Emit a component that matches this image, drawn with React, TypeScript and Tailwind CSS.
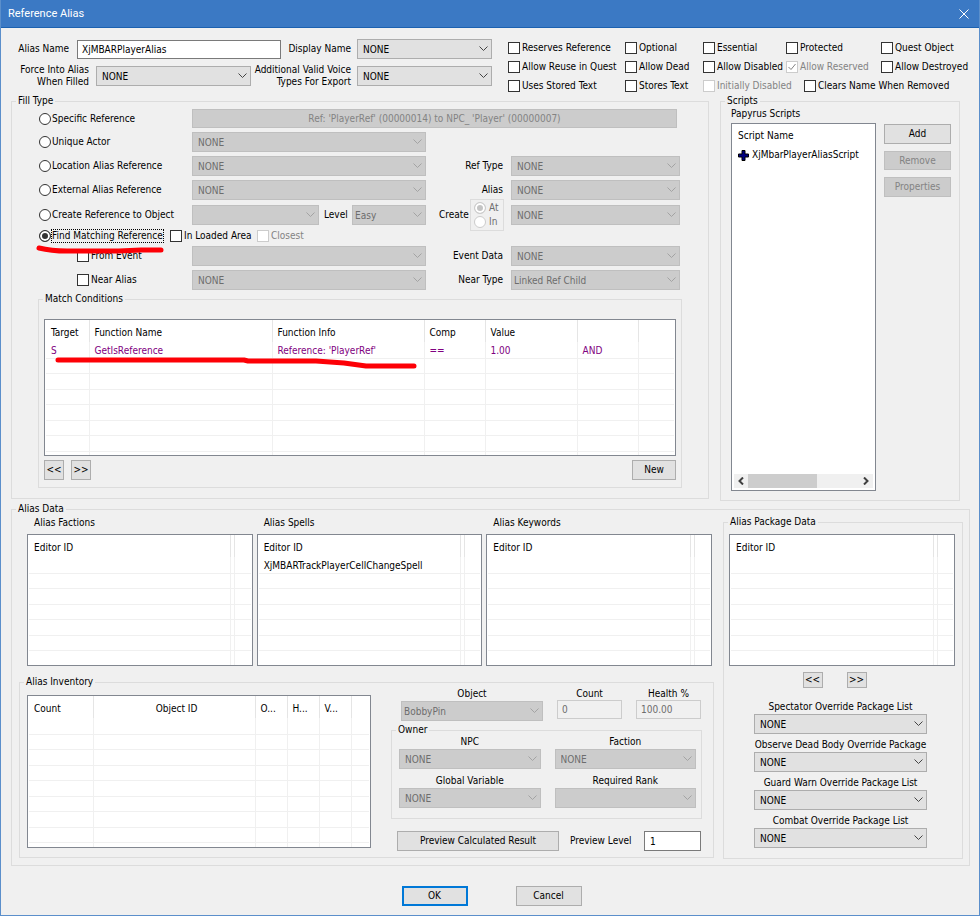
import { useId } from "react";
import type { ReactNode } from "react";

type Column = { title: string; width?: string; align?: string };

const packageLists = [
  "Spectator Override Package List",
  "Observe Dead Body Override Package",
  "Guard Warn Override Package List",
  "Combat Override Package List"
];

const editorColumns: Column[] = [{ title: "Editor ID" }, { title: "", width: "w-1" }, { title: "", width: "w-4" }];

const conditionColumns: Column[] = [
  { title: "Target", width: "w-[43px]" },
  { title: "Function Name", width: "w-[183px]" },
  { title: "Function Info" },
  { title: "Comp", width: "w-[61px]" },
  { title: "Value", width: "w-[92px]" },
  { title: "", width: "w-[61px]" },
  { title: "", width: "w-[36px]" }
];

const inventoryColumns: Column[] = [
  { title: "Count", width: "w-[64px]" },
  { title: "Object ID", align: "text-center" },
  { title: "O...", width: "w-8" },
  { title: "H...", width: "w-8" },
  { title: "V...", width: "w-8" },
  { title: "", width: "w-[18px]" }
];

export default function App() {
  return (
    <main className="flex min-h-screen w-full flex-col border border-t-0 border-[#5b8fcb] bg-[#f0f0f0] font-['DejaVu_Sans_Condensed','DejaVu_Sans',sans-serif] text-[10px] leading-3 text-black">
      <header className="flex h-7 items-center justify-between border-b border-[#1c61b0] bg-[#3b79c4] pr-[10px] pl-[7px] text-white">
        <h1 className="font-[Roboto,'Open_Sans',sans-serif] text-[11px]">Reference Alias</h1>
        <button type="button" aria-label="Close">
          <svg width="10" height="10" viewBox="0 0 10 10" stroke="currentColor" fill="none">
            <path d="M0.5 0.5 9.5 9.5M9.5 0.5 0.5 9.5" />
          </svg>
        </button>
      </header>

      <div className="flex flex-col pt-[10px] pr-[9px] pl-[10px]">
        <div className="flex gap-4">
          <NameFields />
          <AliasFlags />
        </div>
        <div className="flex items-start gap-[11px] pr-[10px]">
          <FillType />
          <Scripts />
        </div>
        <AliasData />
        <div className="mt-5 flex justify-center gap-12 pl-0.5">
          <button type="button" className="h-5 w-[66px] border-2 border-[#0078d7] bg-[#e1e1e1]">
            OK
          </button>
          <PushButton className="h-5 w-[66px]">Cancel</PushButton>
        </div>
      </div>
    </main>
  );
}

function NameFields() {
  return (
    <div className="flex flex-1 flex-col gap-[5px] pt-px">
      <div className="flex h-5 items-center">
        <label htmlFor="alias-name" className="w-[58px] text-right">
          Alias Name
        </label>
        <input id="alias-name" defaultValue="XjMBARPlayerAlias" className="ml-2 h-[19px] min-w-0 flex-1 border border-[#7a7a7a] bg-white px-1" />
        <label htmlFor="display-name" className="w-[70px] text-right">
          Display Name
        </label>
        <Combo id="display-name" value="NONE" className="ml-[6px] w-[135px]" />
      </div>
      <div className="flex h-6 items-center">
        <label htmlFor="force-alias" className="w-[78px] text-right">
          Force Into Alias
          <br />
          When Filled
        </label>
        <Combo id="force-alias" value="NONE" className="ml-[7px] min-w-0 flex-1" />
        <label htmlFor="voice-types" className="w-[100px] text-right">
          Additional Valid Voice
          <br />
          Types For Export
        </label>
        <Combo id="voice-types" value="NONE" className="ml-[6px] w-[135px]" />
      </div>
    </div>
  );
}

function AliasFlags() {
  return (
    <div className="grid auto-rows-[19px] grid-cols-[117px_78px_83px_95px_89px] items-center">
      <Check label="Reserves Reference" />
      <Check label="Optional" />
      <Check label="Essential" />
      <Check label="Protected" />
      <Check label="Quest Object" />
      <Check label="Allow Reuse in Quest" />
      <Check label="Allow Dead" />
      <Check label="Allow Disabled" />
      <Check label="Allow Reserved" checked disabled />
      <Check label="Allow Destroyed" />
      <Check label="Uses Stored Text" />
      <Check label="Stores Text" />
      <Check label="Initially Disabled" disabled />
      <div className="col-span-2 pl-[18px]">
        <Check label="Clears Name When Removed" />
      </div>
    </div>
  );
}

function FillType() {
  return (
    <Group title="Fill Type" className="flex-1" bodyClass="pr-[26px] pb-[10px] pl-[26px]">
      <div className="flex h-[23px] items-center pr-[5px] pl-px">
        <Radio label="Specific Reference" className="w-[153px]" />
        <PushButton disabled className="h-[19px] flex-1">
          Ref: 'PlayerRef' (00000014) to NPC_ 'Player' (00000007)
        </PushButton>
      </div>
      <div className="flex gap-[13px] pb-px pl-px">
        <div className="flex-1">
          <div className="flex h-6 items-center">
            <Radio label="Unique Actor" className="w-[153px]" />
            <Combo value="NONE" label="Unique Actor" disabled className="flex-1" />
          </div>
          <div className="flex h-6 items-center">
            <Radio label="Location Alias Reference" className="w-[153px]" />
            <Combo value="NONE" label="Location Alias Reference" disabled className="flex-1" />
          </div>
          <div className="flex h-6 items-center">
            <Radio label="External Alias Reference" className="w-[153px]" />
            <Combo value="NONE" label="External Alias Reference" disabled className="flex-1" />
          </div>
          <div className="flex h-[26px] items-center">
            <Radio label="Create Reference to Object" className="w-[153px]" />
            <Combo value="" label="Object" disabled className="flex-1" />
            <label htmlFor="level" className="w-[33px] pl-[5px]">
              Level
            </label>
            <Combo id="level" value="Easy" tight disabled className="w-[74px]" />
          </div>
          <div className="relative flex h-4 items-center">
            <Radio label="Find Matching Reference" checked className="w-[131px]" />
            <Check label="In Loaded Area" className="w-[87px]" />
            <Check label="Closest" disabled />
            <svg className="pointer-events-none absolute top-4 -left-1 z-10" width="132" height="12" viewBox="0 0 132 12" fill="none" stroke="#fd0006" strokeWidth="5" strokeLinecap="round" strokeLinejoin="round">
              <path d="M4 4C12 6 20 7 32 7H84L106 6H126" />
            </svg>
          </div>
          <div className="flex h-[23px] items-center">
            <Check label="From Event" className="w-[153px] pl-[38px]" />
            <Combo value="" label="From Event" disabled className="flex-1" />
          </div>
          <div className="flex h-[25px] items-center">
            <Check label="Near Alias" className="w-[153px] pl-[38px]" />
            <Combo value="NONE" label="Near Alias" disabled className="flex-1" />
          </div>
        </div>
        <div className="w-[243px] pt-6">
          <SideField label="Ref Type" value="NONE" />
          <SideField label="Alias" value="NONE" />
          <div className="flex h-[26px] items-center pr-0.5">
            <span className="w-[31px]">Create</span>
            <div role="radiogroup" aria-label="Create" className="mr-[7px] flex h-8 w-[34px] shrink-0 flex-col justify-center gap-0.5 border border-[#dcdcdc] pl-[3px]">
              <Radio label="At" group="create" checked disabled />
              <Radio label="In" group="create" disabled />
            </div>
            <Combo value="NONE" label="Create target" disabled className="flex-1" />
          </div>
          <div className="pt-4">
            <SideField label="Event Data" value="NONE" />
            <SideField label="Near Type" value="Linked Ref Child" tight />
          </div>
        </div>
      </div>

      <Group title="Match Conditions" bodyClass="relative px-[5px] pt-[14px] pb-[7px]">
        <ListView
          columns={conditionColumns}
          rows={[["S", "GetIsReference", "Reference: 'PlayerRef'", "==", "1.00", "AND", ""]]}
          blanks={6}
          tail="h-1"
          rowClass="text-[#800080]"
        />
        <svg className="pointer-events-none absolute top-[49px] left-[15px]" width="364" height="20" viewBox="0 0 364 20" fill="none" stroke="#fd0006" strokeWidth="5" strokeLinecap="round" strokeLinejoin="round">
          <path d="M4 6H190L194 7H262L290 9L312 12H360" />
        </svg>
        <div className="mt-1 flex gap-[7px]">
          <PushButton className="h-5 w-5">&lt;&lt;</PushButton>
          <PushButton className="h-5 w-5">&gt;&gt;</PushButton>
          <PushButton className="ml-auto h-5 w-11">New</PushButton>
        </div>
      </Group>
    </Group>
  );
}

function SideField({ label, value, tight }: { label: string; value: string; tight?: boolean }) {
  const id = useId();
  return (
    <div className="flex h-6 items-center pr-0.5">
      <label htmlFor={id} className="w-16 text-right">
        {label}
      </label>
      <Combo id={id} value={value} tight={tight} disabled className="ml-2 flex-1" />
    </div>
  );
}

function Scripts() {
  return (
    <Group title="Scripts" className="w-[240px]" bodyClass="pr-2 pb-[9px] pl-[10px]">
      <h2 className="pt-px">Papyrus Scripts</h2>
      <div className="mt-[3px] flex gap-2">
        <div className="flex h-[368px] flex-1 flex-col border border-[#828790] bg-white p-0.5">
          <table className="w-full text-left">
            <thead>
              <tr>
                <th className="h-[19px] pl-1 font-normal">Script Name</th>
              </tr>
            </thead>
            <tbody>
              <tr>
                <td className="h-5 pl-1">
                  <span className="flex items-center gap-[3px]">
                    <svg width="11" height="11" viewBox="0 0 11 11">
                      <path d="M4 0.5H7V4H10.5V7H7V10.5H4V7H0.5V4H4Z" fill="#000080" stroke="#000" />
                    </svg>
                    XjMbarPlayerAliasScript
                  </span>
                </td>
              </tr>
            </tbody>
          </table>
          <div className="mt-auto flex h-[14px] items-center bg-[#f0f0f0] px-1">
            <svg width="6" height="8" viewBox="0 0 6 8" fill="none" stroke="#404040" strokeWidth="2">
              <path d="M5 0.5 1.5 4 5 7.5" />
            </svg>
            <span className="ml-1 h-full w-[69px] bg-[#cdcdcd]" />
            <svg className="ml-auto" width="6" height="8" viewBox="0 0 6 8" fill="none" stroke="#404040" strokeWidth="2">
              <path d="M1 0.5 4.5 4 1 7.5" />
            </svg>
          </div>
        </div>
        <div className="flex w-[67px] flex-col gap-[7px] pt-px">
          <PushButton className="h-5">Add</PushButton>
          <PushButton disabled className="h-[19px]">
            Remove
          </PushButton>
          <PushButton disabled className="h-5">
            Properties
          </PushButton>
        </div>
      </div>
    </Group>
  );
}

function AliasData() {
  return (
    <Group title="Alias Data" className="mt-0.5" bodyClass="flex gap-[9px] pr-[6px] pb-[6px] pl-[7px]">
      <div className="flex-1">
        <div className="flex gap-1 pr-0.5 pl-2">
          <EditorList title="Alias Factions" />
          <EditorList title="Alias Spells" rows={[["XjMBARTrackPlayerCellChangeSpell", "", ""]]} />
          <EditorList title="Alias Keywords" />
        </div>
        <Inventory />
      </div>
      <PackageData />
    </Group>
  );
}

function EditorList({ title, rows = [] }: { title: string; rows?: string[][] }) {
  return (
    <section className="min-w-0 flex-1">
      <h2 className="mb-[5px] pt-0.5 pl-[7px]">{title}</h2>
      <ListView columns={editorColumns} rows={rows} blanks={6 - rows.length} tail="h-[15px]" />
    </section>
  );
}

function Inventory() {
  return (
    <Group title="Alias Inventory" className="mt-[10px]" bodyClass="flex gap-5 pr-[11px] pb-[6px] pl-[7px]">
      <div className="flex-1 pt-[7px]">
        <ListView columns={inventoryColumns} rows={[]} blanks={8} tail="h-[5px]" />
      </div>
      <div className="w-[311px]">
        <div className="flex items-start gap-[14px] pl-[10px]">
          <StackField label="Object" value="BobbyPin" tight className="w-[142px]" />
          <NumberField label="Count" value="0" />
          <NumberField label="Health %" value="100.00" />
        </div>
        <Group title="Owner" className="mt-[3px]" bodyClass="grid grid-cols-2 gap-x-[14px] gap-y-[6px] pr-[5px] pb-[10px] pl-[7px]">
          <StackField label="NPC" value="NONE" />
          <StackField label="Faction" value="NONE" />
          <StackField label="Global Variable" value="NONE" />
          <StackField label="Required Rank" value="" />
        </Group>
        <div className="mt-3 flex items-center pr-px pl-[6px]">
          <PushButton className="h-5 w-[162px]">Preview Calculated Result</PushButton>
          <label htmlFor="preview-level" className="ml-[11px]">
            Preview Level
          </label>
          <input id="preview-level" defaultValue="1" className="ml-auto h-5 w-[57px] border border-[#7a7a7a] bg-white px-[5px]" />
        </div>
      </div>
    </Group>
  );
}

function PackageData() {
  return (
    <Group title="Alias Package Data" className="mt-px w-[240px] self-start" bodyClass="pt-[6px] pr-[7px] pb-[10px] pl-[5px]">
      <ListView columns={editorColumns} rows={[]} blanks={6} tail="h-[15px]" />
      <div className="mt-[6px] flex justify-center gap-6 pr-[15px]">
        <PushButton className="h-4 w-5">&lt;&lt;</PushButton>
        <PushButton className="h-4 w-5">&gt;&gt;</PushButton>
      </div>
      <div className="mt-[13px] flex flex-col gap-[5px] pr-7 pl-[25px]">
        {packageLists.map((title) => (
          <StackField key={title} label={title} value="NONE" enabled />
        ))}
      </div>
    </Group>
  );
}

function StackField({ label, value, enabled, tight, className = "" }: { label: string; value: string; enabled?: boolean; tight?: boolean; className?: string }) {
  const id = useId();
  return (
    <div className={`flex flex-col items-stretch gap-px ${className}`}>
      <label htmlFor={id} className="text-center whitespace-nowrap">
        {label}
      </label>
      <Combo id={id} value={value} tight={tight} disabled={!enabled} />
    </div>
  );
}

function NumberField({ label, value }: { label: string; value: string }) {
  const id = useId();
  return (
    <div className="flex w-[65px] flex-col">
      <label htmlFor={id} className="text-center">
        {label}
      </label>
      <input id={id} defaultValue={value} disabled className="h-[19px] w-full border border-[#cccccc] px-1 text-[#6d6d6d]" />
    </div>
  );
}

function Group({ title, className = "", bodyClass = "", children }: { title: string; className?: string; bodyClass?: string; children: ReactNode }) {
  return (
    <fieldset className={`min-w-0 border border-[#dcdcdc] ${className}`}>
      <legend className="ml-1 h-3 px-0.5">{title}</legend>
      <div className={bodyClass}>{children}</div>
    </fieldset>
  );
}

function ListView({ columns, rows, blanks, tail, rowClass = "" }: { columns: Column[]; rows: string[][]; blanks: number; tail: string; rowClass?: string }) {
  return (
    <div className="border border-[#828790] bg-white px-px">
      <table className="w-full table-fixed border-collapse text-left">
        <thead>
          <tr className="h-[22px]">
            {columns.map((column, i) => (
              <th
                key={i}
                className={`overflow-hidden border-r border-[#e5e5e5] p-0 font-normal whitespace-nowrap last:border-r-0 ${column.title ? "pt-1 pl-[5px]" : ""} ${column.width ?? ""} ${column.align ?? ""}`}
              >
                {column.title}
              </th>
            ))}
          </tr>
        </thead>
        <tbody>
          {rows.map((row, i) => (
            <tr key={i} className={`h-4 ${rowClass}`}>
              {row.map((cell, j) => (
                <td key={j} className={`border-r border-b border-[#f0f0f0] p-0 whitespace-nowrap last:border-r-0 ${cell ? "pt-[3px] pl-[5px]" : ""}`}>
                  {cell}
                </td>
              ))}
            </tr>
          ))}
          {Array.from({ length: blanks }, (_, i) => (
            <tr key={`blank-${i}`} className="h-4 even:h-[15px]">
              {columns.map((_column, j) => (
                <td key={j} className="border-r border-b border-[#f0f0f0] p-0 last:border-r-0" />
              ))}
            </tr>
          ))}
          <tr className={tail}>
            {columns.map((_column, j) => (
              <td key={j} className="border-r border-[#f0f0f0] p-0 last:border-r-0" />
            ))}
          </tr>
        </tbody>
      </table>
    </div>
  );
}

function Combo({ id, value, label, disabled, tight, className = "" }: { id?: string; value: string; label?: string; disabled?: boolean; tight?: boolean; className?: string }) {
  return (
    <div className={`relative ${className}`}>
      <select
        id={id}
        aria-label={label}
        disabled={disabled}
        defaultValue={value}
        className={`block h-5 w-full appearance-none border border-[#adadad] bg-[#e1e1e1] pt-0.5 pr-4 disabled:border-[#bfbfbf] disabled:bg-[#cccccc] disabled:text-[#6d6d6d] disabled:opacity-100 ${tight ? "pl-0.5" : "pl-[5px]"}`}
      >
        <option>{value}</option>
      </select>
      <svg className={`pointer-events-none absolute top-[7px] right-1 ${disabled ? "text-[#a3a3a3]" : "text-[#444444]"}`} width="9" height="6" viewBox="0 0 9 6" fill="none" stroke="currentColor">
        <path d="M0.5 0.5 4.5 4.5 8.5 0.5" />
      </svg>
    </div>
  );
}

function Check({ label, checked, disabled, className = "" }: { label: string; checked?: boolean; disabled?: boolean; className?: string }) {
  return (
    <label className={`relative flex items-center gap-0.5 whitespace-nowrap ${disabled ? "text-[#838383]" : ""} ${className}`}>
      <input type="checkbox" defaultChecked={checked} disabled={disabled} className="peer size-3 shrink-0 appearance-none border border-[#333333] bg-white disabled:border-[#cccccc]" />
      <svg className="pointer-events-none absolute left-0.5 hidden peer-checked:block" width="8" height="8" viewBox="0 0 8 8" fill="none" stroke="currentColor">
        <path d="M0.5 4 3 6.5 7.5 1" />
      </svg>
      {label}
    </label>
  );
}

function Radio({ label, group = "fill-type", checked, disabled, className = "" }: { label: string; group?: string; checked?: boolean; disabled?: boolean; className?: string }) {
  const focused = checked && !disabled;
  return (
    <label className={`flex items-center whitespace-nowrap ${disabled ? "gap-[3px] text-[#6d6d6d]" : "gap-px"} ${className}`}>
      <input
        type="radio"
        name={group}
        defaultChecked={checked}
        disabled={disabled}
        className="size-3 shrink-0 appearance-none rounded-full border border-[#333333] bg-white checked:bg-[#333333] checked:shadow-[inset_0_0_0_2px_white] disabled:border-[#cccccc] disabled:checked:bg-[#c4c4c4]"
      />
      <span className={focused ? "outline outline-dotted outline-black" : ""}>{label}</span>
    </label>
  );
}

function PushButton({ children, disabled, className = "" }: { children: ReactNode; disabled?: boolean; className?: string }) {
  return (
    <button type="button" disabled={disabled} className={`border border-[#adadad] bg-[#e1e1e1] disabled:border-[#bfbfbf] disabled:bg-[#cccccc] disabled:text-[#838383] ${className}`}>
      {children}
    </button>
  );
}
